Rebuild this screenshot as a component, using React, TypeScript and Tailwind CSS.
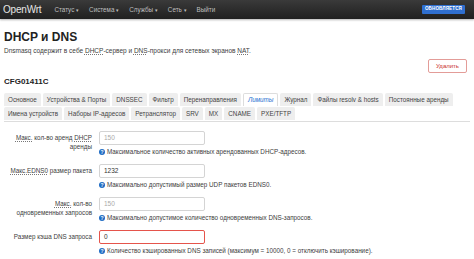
const font = { fontFamily: '"Liberation Sans", Arial, sans-serif' }

const menu = ['Статус', 'Система', 'Службы', 'Сеть']

const tabsRow1 = [
  'Основное',
  'Устройства & Порты',
  'DNSSEC',
  'Фильтр',
  'Перенаправления',
  'Лимиты',
  'Журнал',
  'Файлы resolv & hosts',
  'Постоянные аренды',
]
const tabsRow2 = ['Имена устройств', 'Наборы IP-адресов', 'Ретранслятор', 'SRV', 'MX', 'CNAME', 'PXE/TFTP']

function Abbr({ children }: { children: React.ReactNode }) {
  return <span className="underline decoration-dotted decoration-[#777] underline-offset-[1px]">{children}</span>
}

function HelpIcon() {
  return (
    <span className="inline-flex items-center justify-center w-[6px] h-[6px] rounded-full bg-[#1f6cc4] text-white text-[5px] font-bold leading-none mr-[2px] shrink-0">
      ?
    </span>
  )
}

function Tab({ label, active }: { label: string; active?: boolean }) {
  return (
    <div
      className={
        'h-[13px] px-[4px] flex items-center text-[6.3px] rounded-t-[2px] ' +
        (active
          ? 'bg-white border border-b-0 border-[#ddd] text-[#1f6fd0] italic'
          : 'bg-[#eeeeee] text-[#444]')
      }
    >
      {label}
    </div>
  )
}

interface FieldProps {
  label: React.ReactNode
  value: string
  placeholder?: boolean
  error?: boolean
  help: string
}

function Field({ label, value, placeholder, error, help }: FieldProps) {
  return (
    <div className="flex">
      <div className="w-[88px] text-right text-[6.3px] leading-[8.5px] text-[#404040] pt-[3px] shrink-0">{label}</div>
      <div className="ml-[7px] flex flex-col">
        <div
          className={
            'w-[106px] h-[14px] flex items-center px-[4px] text-[6.5px] rounded-[2px] bg-white ' +
            (error ? 'border border-[#e5544b]' : 'border border-[#d4d4d4]') +
            (placeholder ? ' text-[#aaa]' : ' text-[#333]')
          }
        >
          {value}
        </div>
        <div className="mt-[3px] flex items-center whitespace-nowrap text-[6.3px] leading-[8px] text-[#404040]">
          <HelpIcon />
          {help}
        </div>
      </div>
    </div>
  )
}

export default function App() {
  return (
    <div className="w-[474px] h-[259px] bg-white overflow-hidden" style={font}>
      {/* Navbar */}
      <div className="h-[19px] bg-gradient-to-b from-[#3a3a3a] to-[#202020] shadow-[0_1px_2px_rgba(0,0,0,0.3)] flex items-center px-[3px]">
        <span className="text-[10px] text-[#e6e6e6] tracking-[-0.2px] mr-[13px]">OpenWrt</span>
        <div className="flex items-center gap-[10px] text-[6.3px] text-[#bfbfbf]">
          {menu.map(m => (
            <span key={m}>
              {m} <span className="text-[5px]">▾</span>
            </span>
          ))}
          <span>Выйти</span>
        </div>
        <div className="ml-auto mr-[6px] bg-[#2f6fd0] text-white text-[4.6px] font-bold px-[3px] h-[9px] flex items-center rounded-[1px] tracking-[0.1px]">
          ОБНОВЛЯЕТСЯ
        </div>
      </div>

      <div className="px-[4px]">
        <h2 className="mt-[11px] text-[12px] font-bold leading-[14px] text-[#222]">DHCP и DNS</h2>
        <p className="mt-[3px] text-[6.5px] leading-[8px] text-[#404040]">
          Dnsmasq содержит в себе <Abbr>DHCP</Abbr>-сервер и <Abbr>DNS</Abbr>-прокси для сетевых экранов{' '}
          <Abbr>NAT</Abbr>.
        </p>

        <div className="flex justify-end mt-[4px]">
          <button className="mr-[3px] w-[39px] h-[14px] border border-[#e39c98] rounded-[2px] text-[#c9302c] text-[6px] bg-white">
            Удалить
          </button>
        </div>

        <h3 className="mt-[4px] text-[8px] font-bold leading-[10px] text-[#222]">CFG01411C</h3>

        {/* Tabs */}
        <div className="mt-[6px] border-b border-[#ddd] pb-[1px] flex flex-col gap-[1px]">
          <div className="flex gap-[2px] items-end">
            {tabsRow1.map(t => (
              <Tab key={t} label={t} active={t === 'Лимиты'} />
            ))}
          </div>
          <div className="flex gap-[2px]">
            {tabsRow2.map(t => (
              <Tab key={t} label={t} />
            ))}
          </div>
        </div>

        {/* Form */}
        <div className="mt-[9px] flex flex-col gap-[8px]">
          <Field
            label={
              <>
                <Abbr>Макс.</Abbr> кол-во аренд <Abbr>DHCP</Abbr>
                <br />
                аренды
              </>
            }
            value="150"
            placeholder
            help="Максимальное количество активных арендованных DHCP-адресов."
          />
          <Field
            label={
              <>
                <Abbr>Макс.EDNS0</Abbr> размер пакета
              </>
            }
            value="1232"
            help="Максимально допустимый размер UDP пакетов EDNS0."
          />
          <Field
            label={
              <>
                <Abbr>Макс.</Abbr> кол-во
                <br />
                одновременных запросов
              </>
            }
            value="150"
            placeholder
            help="Максимально допустимое количество одновременных DNS-запросов."
          />
          <Field
            label="Размер кэша DNS запроса"
            value="0"
            error
            help="Количество кэшированных DNS записей (максимум = 10000, 0 = отключить кэширование)."
          />
        </div>
      </div>
    </div>
  )
}
